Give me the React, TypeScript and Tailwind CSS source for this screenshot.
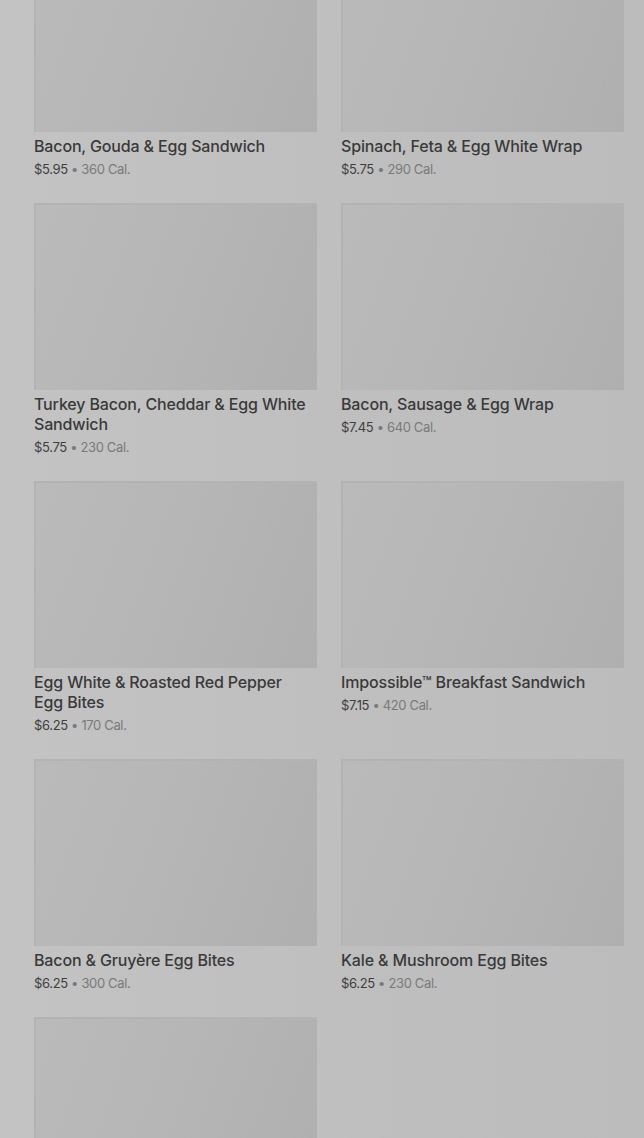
import React from "react";

type Item = { name: string; price: string; cal: string };

const items: Item[] = [
  { name: "Bacon, Gouda & Egg Sandwich", price: "$5.95", cal: "360 Cal." },
  { name: "Spinach, Feta & Egg White Wrap", price: "$5.75", cal: "290 Cal." },
  { name: "Turkey Bacon, Cheddar & Egg White Sandwich", price: "$5.75", cal: "230 Cal." },
  { name: "Bacon, Sausage & Egg Wrap", price: "$7.45", cal: "640 Cal." },
  { name: "Egg White & Roasted Red Pepper Egg Bites", price: "$6.25", cal: "170 Cal." },
  { name: "Impossible™ Breakfast Sandwich", price: "$7.15", cal: "420 Cal." },
  { name: "Bacon & Gruyère Egg Bites", price: "$6.25", cal: "300 Cal." },
  { name: "Kale & Mushroom Egg Bites", price: "$6.25", cal: "230 Cal." },
  { name: "", price: "", cal: "" },
];

function Card({ item }: { item: Item }) {
  return (
    <div className="flex flex-col">
      <div className="h-[187px] w-full border-t-2 border-l-2 border-[#b3b3b3] bg-[linear-gradient(110deg,#bababa_0%,#b6b6b6_45%,#afafaf_100%)]" />
      {item.name && (
        <>
          <div className="mt-1 pr-[6px] text-[16px] leading-[20px] font-medium text-[#3a3a3a] tracking-[-0.15px]">
            {item.name}
          </div>
          <div className="mt-1 text-[13px] leading-[18px] tracking-[-0.35px]">
            <span className="text-[#3f3f3f]">{item.price}</span>
            <span className="text-[#7a7a7a]"> • {item.cal}</span>
          </div>
        </>
      )}
    </div>
  );
}

export default function App() {
  return (
    <div
      className="w-[644px] h-[1138px] overflow-hidden bg-[linear-gradient(90deg,#c3c3c3_0%,#bfbfbf_50%,#bcbcbc_100%)]"
      style={{ fontFamily: "Inter, 'Noto Sans', sans-serif" }}
    >
      <div className="-mt-[55px] pl-[34px] pr-[20px] grid grid-cols-2 gap-x-[24px] gap-y-[25px]">
        {items.map((it, i) => (
          <Card key={i} item={it} />
        ))}
      </div>
    </div>
  );
}
